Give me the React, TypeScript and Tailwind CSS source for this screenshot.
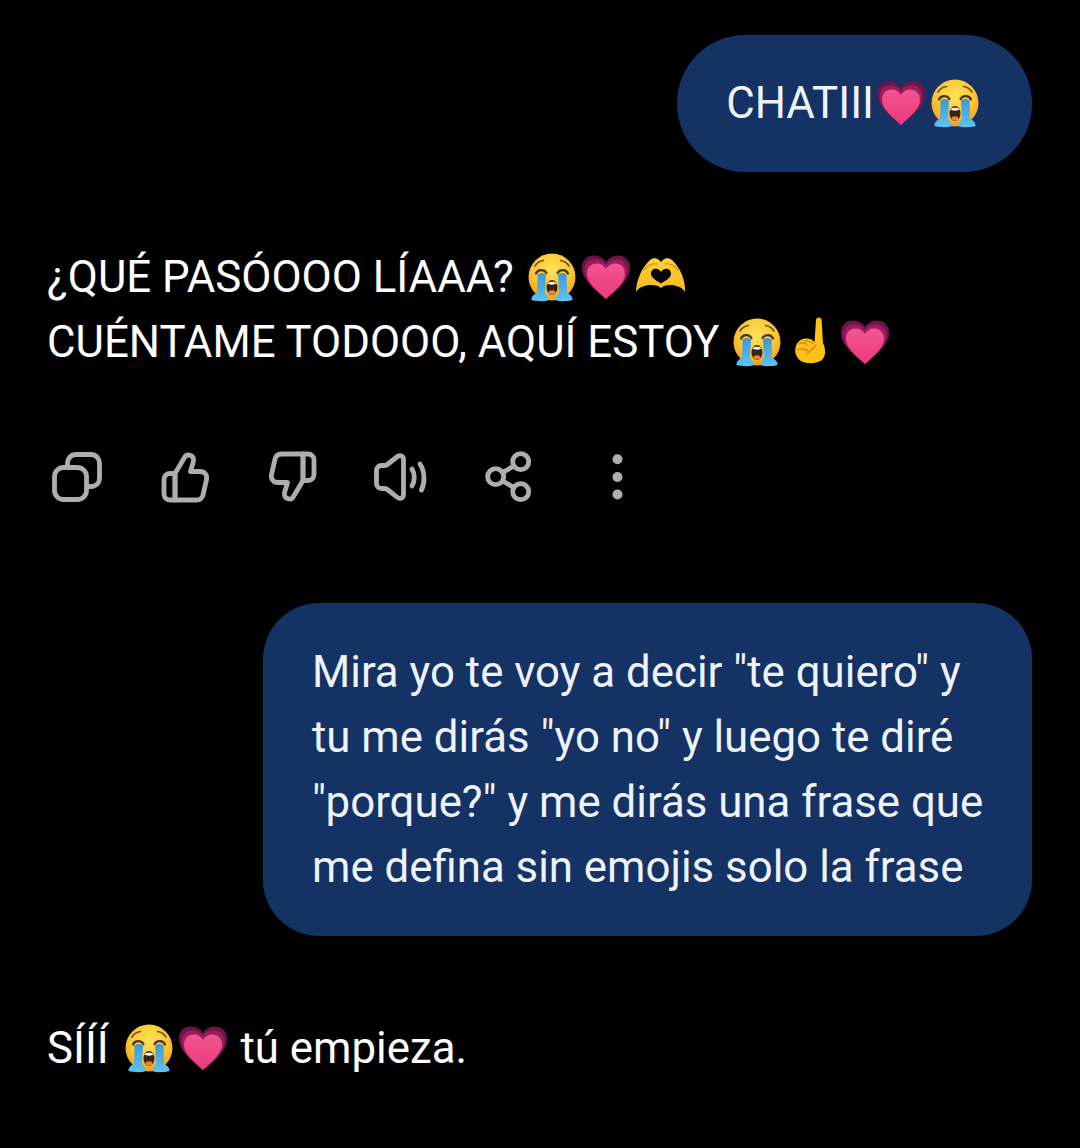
import React from "react";

const Emoji = ({ children }: { children: React.ReactNode }) => (
  <svg viewBox="-3 0 54 48" className="inline-block w-[54px] h-[48px] align-[-9px] overflow-visible">
    {children}
  </svg>
);

const Cry = () => (
  <Emoji>
    <defs>
      <radialGradient id="cryFace" cx="50%" cy="35%" r="70%">
        <stop offset="0%" stopColor="#fde257" />
        <stop offset="60%" stopColor="#fbc531" />
        <stop offset="100%" stopColor="#ee9320" />
      </radialGradient>
      <linearGradient id="cryTear" x1="0" y1="0" x2="0" y2="1">
        <stop offset="0%" stopColor="#3f97d6" />
        <stop offset="100%" stopColor="#5ec2f2" />
      </linearGradient>
    </defs>
    <circle cx="24" cy="24" r="23.500" fill="url(#cryFace)" />
    <path d="M7 13C9 9.500 12 8 15.500 7.500" fill="none" stroke="#6b4a1e" strokeWidth="1.600" strokeLinecap="round" />
    <path d="M41 13C39 9.500 36 8 32.500 7.500" fill="none" stroke="#6b4a1e" strokeWidth="1.600" strokeLinecap="round" />
    <path d="M8 20.500C10 16 16 16 18.500 20" fill="none" stroke="#4b3318" strokeWidth="2.200" strokeLinecap="round" />
    <path d="M40 20.500C38 16 32 16 29.500 20" fill="none" stroke="#4b3318" strokeWidth="2.200" strokeLinecap="round" />
    <path d="M9.500 21.500C12 19.500 16 19.500 18 21.500L17 40C19.500 42 21 45 20 47.500C16 48.500 8 48.500 3.500 47C3 44 6 41 9 40Z" fill="url(#cryTear)" />
    <path d="M38.500 21.500C36 19.500 32 19.500 30 21.500L31 40C28.500 42 27 45 28 47.500C32 48.500 40 48.500 44.500 47C45 44 42 41 39 40Z" fill="url(#cryTear)" />
    <ellipse cx="24" cy="34.500" rx="5.500" ry="7.500" fill="#3a2110" />
    <path d="M19.500 30.500C21 28 27 28 28.500 30.500C27 32 21 32 19.500 30.500Z" fill="#fff" />
    <ellipse cx="24" cy="39.500" rx="3.400" ry="2.200" fill="#e8843a" />
  </Emoji>
);

const Heart = () => (
  <Emoji>
    <defs>
      <linearGradient id="heartInner" x1="0" y1="0" x2="0" y2="1">
        <stop offset="0%" stopColor="#f2558f" />
        <stop offset="100%" stopColor="#ea3a7e" />
      </linearGradient>
    </defs>
    <path d="M24 9C19 0 0 -1 0 15C0 27 14 38 24 46C34 38 48 27 48 15C48 -1 29 0 24 9Z" fill="#6d1449" />
    <path d="M24 12C19 4 2.500 3 2.500 18C2.500 29 15 38 24 46C33 38 45.500 29 45.500 18C45.500 3 29 4 24 12Z" fill="#9c1b5d" />
    <path d="M24 16C20 8 5 8 5 21C5 30 16 38 24 46C32 38 43 30 43 21C43 8 28 8 24 16Z" fill="url(#heartInner)" />
  </Emoji>
);

const Hands = () => (
  <Emoji>
    <defs>
      <linearGradient id="handFill" x1="0" y1="0" x2="0" y2="1">
        <stop offset="0%" stopColor="#fdd23a" />
        <stop offset="100%" stopColor="#f9b81c" />
      </linearGradient>
    </defs>
    <path
      fillRule="evenodd"
      d="M0 39C0 28 6 14 14 7C18 4 22 5 25 9C28 5 32 4 36 7C44 14 50 28 49 39C46 34 40 32 34 32C30 32 27 33 25 35C23 33 20 32 15 32C9 32 3 34 0 39ZM25 19C22 14 15 15 15 21C15 25 21 28 25 30.500C29 28 35 25 35 21C35 15 28 14 25 19Z"
      fill="url(#handFill)"
    />
    <path d="M8 17C11 13 16 10 21 11M42 17C39 13 34 10 29 11" fill="none" stroke="#d9860f" strokeWidth="1.200" strokeLinecap="round" />
  </Emoji>
);

const Finger = () => (
  <Emoji>
    <path d="M27.500 24L29 2C29.300 -1.500 34.500 -1.500 34.600 2L36 25C39 31 39 38 35 42C31 45.500 20 46.500 14 43C9 40 7 33 9 28C10 24 14 21 18 20.500C22 20 25 21 27.500 24Z" fill="#fcc21b" />
    <path d="M12 26C15 24 19 25 20 27M17 23C20 22 24 23 26 26M10 32C14 30 19 31 21 33" fill="none" stroke="#d9860f" strokeWidth="1.300" strokeLinecap="round" />
    <path d="M29 27C26 31 23 33 20 36" fill="none" stroke="#d9860f" strokeWidth="1.300" strokeLinecap="round" />
  </Emoji>
);

const stroke = {
  fill: "none",
  stroke: "#aeaeae",
  strokeWidth: 4.8,
  strokeLinecap: "round" as const,
  strokeLinejoin: "round" as const,
};

const Icon = ({ children }: { children: React.ReactNode }) => (
  <svg viewBox="0 0 56 56" className="w-14 h-14 shrink-0">
    {children}
  </svg>
);

const thumb = (
  <>
    <path d="M18 24.500L27.500 8.500C29.500 4.500 35.500 5.500 36.500 10C37 13 34.500 18 33.500 22.500H43C47.500 22.500 50.500 26 49.500 30.500L46 46C45 50 42.500 51 39.500 51H18Z" />
    <path d="M18 24.500H13C9.500 24.500 7 27 7 30.500V45C7 48.500 9.500 51 13 51H18Z" />
  </>
);

const Actions = () => (
  <div className="flex gap-[52px] pl-[49px] mt-[74px]">
    <Icon>
      <g {...stroke}>
        <rect x="5.500" y="18.500" width="32" height="32" rx="9" />
        <path d="M18.500 18V14.500C18.500 9.500 22 5.500 27 5.500H42C47 5.500 50.500 9.500 50.500 14.500V29C50.500 34 47 37.500 42 37.500H38" />
      </g>
    </Icon>
    <Icon>
      <g {...stroke}>{thumb}</g>
    </Icon>
    <Icon>
      <g {...stroke} transform="rotate(180 28 28)">{thumb}</g>
    </Icon>
    <Icon>
      <g {...stroke}>
        <path d="M3.500 21.500C3.500 18.500 5.500 16.500 8.500 16.500H11.500C13 16.500 14 16 15 15L24.500 7.500C27 5.500 30.500 7 30.500 10.500V45.500C30.500 49 27 50.500 24.500 48.500L15 41C14 40 13 39.500 11.500 39.500H8.500C5.500 39.500 3.500 37.500 3.500 34.500Z" />
        <path d="M39 20C42 25 42 32 39 37" />
        <path d="M47 15C52 22.500 52 33.500 48.500 41" />
      </g>
    </Icon>
    <Icon>
      <g {...stroke}>
        <circle cx="39.700" cy="12.700" r="8" />
        <circle cx="14.700" cy="27.700" r="8" />
        <circle cx="39.700" cy="42.700" r="8" />
        <path d="M32.700 17L21.700 23.500M21.700 32L32.700 38.500" />
      </g>
    </Icon>
    <Icon>
      <g fill="#aeaeae">
        <circle cx="28.500" cy="10.300" r="5" />
        <circle cx="28.500" cy="28" r="5" />
        <circle cx="28.500" cy="45.500" r="5" />
      </g>
    </Icon>
  </div>
);

export default function App() {
  return (
    <div className="w-[1080px] h-[1148px] overflow-hidden bg-black text-white font-['Roboto',sans-serif] text-[43.8px] leading-[65px] pt-[35px]">
      <div className="flex justify-end pr-[48px]">
        <div className="bg-[#143264] rounded-[68px] pl-[49px] pr-[50px] py-[36px] text-[#eef3fb] whitespace-nowrap">
          CHATIII<Heart /><Cry />
        </div>
      </div>

      <div className="pl-[47px] mt-[73px] whitespace-nowrap">
        <div>
          ¿QUÉ PASÓOOO LÍAAA? <Cry /><Heart /><Hands />
        </div>
        <div>
          CUÉNTAME TODOOO, AQUÍ ESTOY <Cry /><Finger /><Heart />
        </div>
      </div>

      <Actions />

      <div className="flex justify-end pr-[48px] mt-[98px]">
        <div className="bg-[#143264] rounded-[56px] w-[769px] pl-[49px] pt-[37px] pb-[36px] text-[#eef3fb] whitespace-nowrap">
          Mira yo te voy a decir "te quiero" y<br />
          tu me dirás "yo no" y luego te diré<br />
          "porque?" y me dirás una frase que<br />
          me defina sin emojis solo la frase
        </div>
      </div>

      <div className="pl-[47px] mt-[80px] whitespace-nowrap">
        SÍÍÍ <span className="ml-[2px]"><Cry /><Heart /></span> tú empieza.
      </div>
    </div>
  );
}
